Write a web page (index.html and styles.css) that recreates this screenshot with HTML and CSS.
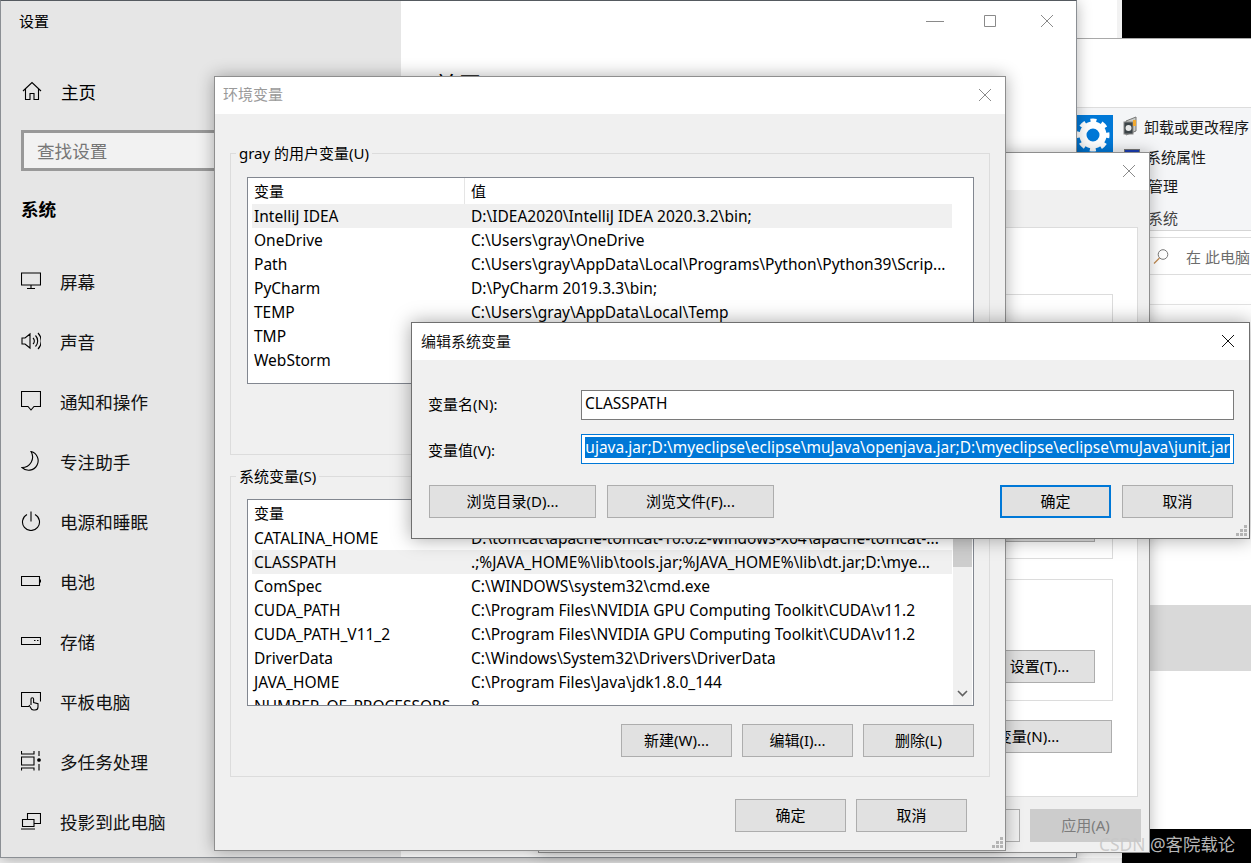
FILE: index.html
```html
<!DOCTYPE html>
<html lang="zh-CN">
<head>
  <meta charset="UTF-8">
  <title>编辑系统变量</title>
  <link rel="stylesheet" href="styles.css">
</head>
<body>
  <div class="desktop">
    <div class="black-top"></div>
    <div class="black-bottom"></div>
    <div class="grey-band"></div>
    <div class="floor-line"></div>

    <!-- control panel, mostly behind everything -->
    <div class="win-panel">
      <div class="panel-top"></div>
      <div class="ribbon">
        <div class="gear-tile">
          <svg width="36" height="38" viewBox="0 0 36 38">
            <circle cx="16" cy="20" r="10" fill="none" stroke="#fff" stroke-width="7"/>
            <circle cx="16" cy="20" r="14.5" fill="none" stroke="#fff" stroke-width="4" stroke-dasharray="6 5.39" stroke-dashoffset="3"/>
          </svg>
        </div>
        <div class="ribbon-links">
          <div class="ribbon-link link-a">
            <svg width="16" height="20" viewBox="0 0 16 20">
              <path d="M3 5l10-4v14l-10 4z" fill="#c9ccc8" stroke="#777"/>
              <rect x="1" y="6" width="9" height="12" fill="#3c4448" stroke="#888"/>
              <circle cx="5.5" cy="12" r="3" fill="#e8e8e8"/>
              <rect x="10" y="4" width="3" height="6" fill="#f0a830"/>
            </svg>
            <span>卸载或更改程序</span>
          </div>
          <div class="ribbon-link link-b">
            <svg class="sys-icon" width="16" height="20" viewBox="0 0 16 20">
              <rect x="0.5" y="0.5" width="15" height="12" fill="#1c3fb5" stroke="#777"/>
            </svg>
            <span>系统属性</span>
          </div>
          <div class="ribbon-link link-c"><span>管理</span></div>
          <div class="ribbon-link link-d"><span>系统</span></div>
        </div>
      </div>
      <div class="panel-search">
        <svg width="16" height="15" viewBox="0 0 16 15">
          <circle cx="10" cy="5.5" r="4.8" fill="none" stroke="#777"/>
          <path d="M6.5 9L1 14.5" stroke="#c08a50" stroke-width="1.2"/>
        </svg>
        <span>在 此电脑</span>
      </div>
      <div class="panel-rule"></div>
    </div>

    <!-- settings app -->
    <div class="win-settings">
      <aside class="side">
        <div class="side-title">设置</div>
        <div class="side-home">
          <svg class="nav-icon" viewBox="0 0 20 20"><path d="M1 10L10 1.5 19 10M3.5 8v10.5H8v-6h4v6h4.500V8"/></svg>
          <span>主页</span>
        </div>
        <div class="side-search">查找设置</div>
        <div class="side-group">系统</div>
        <nav class="side-nav">
          <div class="nav-item">
            <svg class="nav-icon" viewBox="0 0 20 20"><path d="M.5 2h19v12H.5zM10 14v3.500M6 17.500h8"/></svg>
            <span>屏幕</span>
          </div>
          <div class="nav-item">
            <svg class="nav-icon" viewBox="0 0 20 20"><path d="M1 7h3l5-4v14l-5-4H1zM12 7a4 4 0 0 1 0 6M14.500 4.500a8 8 0 0 1 0 11M17 2a11.500 11.500 0 0 1 0 16"/></svg>
            <span>声音</span>
          </div>
          <div class="nav-item">
            <svg class="nav-icon" viewBox="0 0 20 20"><path d="M.5 .5h19v15h-6.500l-3 3.500-3-3.500H.5z"/></svg>
            <span>通知和操作</span>
          </div>
          <div class="nav-item">
            <svg class="nav-icon" viewBox="0 0 20 20"><path d="M10 .5A9.500 9.500 0 1 1 1 16.500 10.500 10.500 0 0 0 10 .5z"/></svg>
            <span>专注助手</span>
          </div>
          <div class="nav-item">
            <svg class="nav-icon" viewBox="0 0 20 20"><path d="M6 3.500a8.500 8.500 0 1 0 8 0M10 .5v10"/></svg>
            <span>电源和睡眠</span>
          </div>
          <div class="nav-item">
            <svg class="nav-icon" viewBox="0 0 20 20"><path d="M.5 5.500h18v9H.5zM19.500 8.500v3"/></svg>
            <span>电池</span>
          </div>
          <div class="nav-item">
            <svg class="nav-icon" viewBox="0 0 20 20"><path d="M.5 6.500h19v7H.5zM13 9.500h1.500M16 9.500h1.500"/></svg>
            <span>存储</span>
          </div>
          <div class="nav-item">
            <svg class="nav-icon" viewBox="0 0 20 20"><path d="M8 15.500H.5V1.500h19v9M10 14V8a1.300 1.300 0 0 1 2.600 0v3.500l4.400 1.200V16a3 3 0 0 1-3 3h-1.500a3 3 0 0 1-2.700-2L8 14"/></svg>
            <span>平板电脑</span>
          </div>
          <div class="nav-item">
            <svg class="nav-icon" viewBox="0 0 20 20"><path d="M.5 0v3h12.500V0M.5 6h12.500v8H.5zM.5 19.500V17h12.500v2.500M18 0v5M18 13v6.500"/><circle cx="18" cy="9" r="1.300" fill="#000"/></svg>
            <span>多任务处理</span>
          </div>
          <div class="nav-item">
            <svg class="nav-icon" viewBox="0 0 20 20"><path d="M6.500 8V2.500h13v10H13M1.500 8.500H13v7H1.500zM0 18h14"/></svg>
            <span>投影到此电脑</span>
          </div>
        </nav>
      </aside>
      <main class="settings-main">
        <div class="win-controls">
          <svg class="ctl-min" width="18" height="12" viewBox="0 0 18 12"><path d="M0 6.500h18"/></svg>
          <svg width="12" height="12" viewBox="0 0 12 12"><path d="M.5 .5h11v11H.5z"/></svg>
          <svg width="12" height="12" viewBox="0 0 12 12"><path d="M0 0l12 12M12 0L0 12"/></svg>
        </div>
        <div class="settings-heading">关于</div>
      </main>
    </div>

    <!-- system properties -->
    <div class="win-props">
      <div class="title-bar">
        <svg class="close-x" width="12" height="12" viewBox="0 0 12 12"><path d="M0 0l12 12M12 0L0 12"/></svg>
      </div>
      <div class="props-body">
        <div class="props-panel">
          <div class="props-box box-a"><button class="btn"></button></div>
          <div class="props-box box-b"><button class="btn">设置(T)...</button></div>
          <div class="props-env"><button class="btn btn-env">环境变量(N)...</button></div>
        </div>
        <div class="props-foot">
          <button class="btn btn-plain"></button>
          <button class="btn btn-off">应用(A)</button>
        </div>
      </div>
    </div>

    <!-- environment variables -->
    <div class="win-env">
      <div class="title-bar title-dim">
        <span>环境变量</span>
        <svg class="close-x" width="12" height="12" viewBox="0 0 12 12"><path d="M0 0l12 12M12 0L0 12"/></svg>
      </div>
      <div class="env-body">
        <section class="group group-user">
          <div class="legend">gray 的用户变量(U)</div>
          <div class="list">
            <div class="list-rows">
              <div class="list-head"><span>变量</span><span class="col-val">值</span></div>
              <div class="row row-on"><span>IntelliJ IDEA</span><span>D:\IDEA2020\IntelliJ IDEA 2020.3.2\bin;</span></div>
              <div class="row"><span>OneDrive</span><span>C:\Users\gray\OneDrive</span></div>
              <div class="row"><span>Path</span><span>C:\Users\gray\AppData\Local\Programs\Python\Python39\Scrip...</span></div>
              <div class="row"><span>PyCharm</span><span>D:\PyCharm 2019.3.3\bin;</span></div>
              <div class="row"><span>TEMP</span><span>C:\Users\gray\AppData\Local\Temp</span></div>
              <div class="row"><span>TMP</span><span></span></div>
              <div class="row"><span>WebStorm</span><span></span></div>
            </div>
          </div>
        </section>
        <section class="group group-sys">
          <div class="legend">系统变量(S)</div>
          <div class="list">
            <div class="list-rows">
              <div class="list-head"><span>变量</span><span class="col-val"></span></div>
              <div class="row"><span>CATALINA_HOME</span><span>D:\tomcat\apache-tomcat-10.0.2-windows-x64\apache-tomcat-...</span></div>
              <div class="row row-on"><span>CLASSPATH</span><span>.;%JAVA_HOME%\lib\tools.jar;%JAVA_HOME%\lib\dt.jar;D:\mye...</span></div>
              <div class="row"><span>ComSpec</span><span>C:\WINDOWS\system32\cmd.exe</span></div>
              <div class="row"><span>CUDA_PATH</span><span>C:\Program Files\NVIDIA GPU Computing Toolkit\CUDA\v11.2</span></div>
              <div class="row"><span>CUDA_PATH_V11_2</span><span>C:\Program Files\NVIDIA GPU Computing Toolkit\CUDA\v11.2</span></div>
              <div class="row"><span>DriverData</span><span>C:\Windows\System32\Drivers\DriverData</span></div>
              <div class="row"><span>JAVA_HOME</span><span>C:\Program Files\Java\jdk1.8.0_144</span></div>
              <div class="row"><span>NUMBER_OF_PROCESSORS</span><span>8</span></div>
            </div>
            <div class="scrollbar">
              <div class="thumb"></div>
              <svg class="chevron" width="11" height="7" viewBox="0 0 11 7"><path d="M1 1l4.500 4.500L10 1"/></svg>
            </div>
          </div>
          <div class="btn-row">
            <button class="btn">新建(W)...</button>
            <button class="btn">编辑(I)...</button>
            <button class="btn">删除(L)</button>
          </div>
        </section>
        <div class="btn-row env-foot">
          <button class="btn">确定</button>
          <button class="btn">取消</button>
        </div>
      </div>
      <svg class="grip" width="12" height="12" viewBox="0 0 12 12"><path d="M8 0h3v3H8zM4 4h3v3H4zM8 4h3v3H8zM0 8h3v3H0zM4 8h3v3H4zM8 8h3v3H8z"/></svg>
    </div>

    <!-- edit system variable -->
    <div class="win-edit">
      <div class="title-bar title-dark">
        <span>编辑系统变量</span>
        <svg class="close-x" width="12" height="12" viewBox="0 0 12 12"><path d="M0 0l12 12M12 0L0 12"/></svg>
      </div>
      <div class="edit-body">
        <div class="field-row">
          <label>变量名(N):</label>
          <div class="field">CLASSPATH</div>
        </div>
        <div class="field-row">
          <label>变量值(V):</label>
          <div class="field field-on">
            <div class="sel-clip"><span class="sel">mujava.jar;D:\myeclipse\eclipse\muJava\openjava.jar;D:\myeclipse\eclipse\muJava\junit.jar</span></div>
          </div>
        </div>
        <div class="edit-btns">
          <button class="btn btn-wide">浏览目录(D)...</button>
          <button class="btn btn-wide">浏览文件(F)...</button>
          <button class="btn btn-main">确定</button>
          <button class="btn">取消</button>
        </div>
      </div>
      <svg class="grip" width="12" height="12" viewBox="0 0 12 12"><path d="M8 0h3v3H8zM4 4h3v3H4zM8 4h3v3H8zM0 8h3v3H0zM4 8h3v3H4zM8 8h3v3H8z"/></svg>
    </div>

    <div class="watermark">CSDN @客院载论</div>
  </div>
</body>
</html>
```

FILE: styles.css
```css
* {
  box-sizing: border-box;
}
body {
  margin: 0;
  font-family: "Noto Sans", "Noto Sans CJK SC", sans-serif;
  font-size: 15px;
  color: #000;
  background: #fff;
}
.desktop {
  position: relative;
  width: 1251px;
  height: 863px;
  overflow: hidden;
  background: #fff;
}
.black-top {
  position: absolute;
  left: 1117px;
  top: 0;
  width: 134px;
  height: 38px;
  background: #000;
  border-left: 5px solid #f2f2f2;
}
.black-bottom {
  position: absolute;
  left: 1122px;
  top: 829px;
  width: 129px;
  height: 34px;
  background: #000;
}
.grey-band {
  position: absolute;
  left: 1150px;
  top: 605px;
  width: 101px;
  height: 66px;
  background: #d9d9d9;
}
.floor-line {
  position: absolute;
  left: 0;
  top: 858px;
  width: 1122px;
  height: 5px;
  background: #f3f3f3;
  border-right: 1px solid #ddd;
}

/* control panel */
.win-panel {
  position: absolute;
  left: 1077px;
  top: 38px;
  width: 174px;
}
.panel-top {
  height: 70px;
  background: #fff;
  border-top: 1px solid #a9a9a9;
  border-bottom: 1px solid #ddd;
}
.ribbon {
  display: flex;
  height: 123px;
  padding-top: 7px;
  background: #f4f5f7;
  border-bottom: 1px solid #d5d5d5;
}
.gear-tile {
  width: 36px;
  height: 38px;
  background: #0078d7;
}
.gear-tile svg {
  display: block;
}
.ribbon-links {
  margin-left: 9px;
  flex: 1;
}
.ribbon-link {
  display: flex;
  align-items: center;
  white-space: nowrap;
  font-size: 15px;
  color: #1a1a1a;
}
.ribbon-link svg {
  flex: none;
}
.link-a {
  height: 24px;
  margin-top: -1px;
  margin-left: 1px;
  gap: 5px;
  margin-bottom: 7px;
}
.link-b {
  height: 22px;
  margin-left: 2px;
  gap: 6px;
}
.sys-icon {
  margin-top: 5px;
}
.link-c {
  height: 36px;
  margin-left: 26px;
}
.link-d {
  height: 28px;
  margin-left: 26px;
  color: #444;
}
.panel-search {
  display: flex;
  align-items: center;
  height: 38px;
  margin-top: 6px;
  padding-left: 76px;
  background: #fff;
  border-top: 1px solid #ddd;
  border-bottom: 1px solid #ddd;
  color: #6d6d6d;
  font-size: 15px;
  white-space: nowrap;
}
.panel-search svg {
  margin-right: 17px;
  flex: none;
}
.panel-rule {
  height: 30px;
  border-bottom: 1px solid #e2e2e2;
}

/* settings */
.win-settings {
  position: absolute;
  left: 0;
  top: 0;
  width: 1077px;
  height: 858px;
  display: flex;
  background: #fff;
  border: 1px solid #8b8f94;
  border-top-color: #555a60;
  box-shadow: 0 2px 14px rgba(0, 0, 0, 0.3);
}
.side {
  width: 400px;
  flex: none;
  padding-left: 20px;
  background: #e6e6e6;
}
.side-title {
  height: 40px;
  margin-left: -2px;
  padding-top: 9px;
  font-size: 15px;
  line-height: 22px;
}
.side-home {
  display: flex;
  align-items: center;
  height: 24px;
  margin-top: 38px;
  font-size: 17.6px;
}
.side-home .nav-icon {
  margin-left: 1px;
  margin-right: 19px;
}
.side-search {
  width: 400px;
  height: 41px;
  margin-top: 27px;
  padding-left: 13px;
  border: 3px solid #999;
  background: #f2f2f2;
  color: #767676;
  font-size: 17.6px;
  line-height: 36px;
}
.side-group {
  height: 26px;
  margin-top: 25px;
  font-size: 17.6px;
  line-height: 26px;
  font-weight: 700;
}
.side-nav {
  margin-top: 29px;
}
.nav-item {
  display: flex;
  align-items: center;
  gap: 19px;
  height: 60px;
  font-size: 17.6px;
  color: #111;
}
.nav-icon {
  width: 20px;
  height: 20px;
  flex: none;
  fill: none;
  stroke: #000;
  stroke-width: 1.1;
}
.settings-main {
  flex: 1;
  position: relative;
}
.win-controls {
  display: flex;
  justify-content: flex-end;
  align-items: center;
  gap: 45px;
  padding: 14px 23px 0 0;
}
.win-controls svg,
.close-x {
  fill: none;
  stroke: #8a8a8a;
  stroke-width: 1;
}
.ctl-min {
  margin-right: -5px;
}
.settings-heading {
  margin: 41px 0 0 33px;
  font-size: 24px;
  line-height: 34px;
}

/* shared window parts */
.title-bar {
  position: relative;
  height: 37px;
  padding: 6px 0 0 8px;
  background: #fff;
  line-height: 22px;
  font-size: 15px;
}
.title-dim {
  color: #9a9a9a;
}
.close-x {
  position: absolute;
  right: 14px;
  top: 12px;
}
.grip {
  position: absolute;
  right: 1px;
  bottom: 1px;
  fill: #b4b4b4;
}
.btn {
  width: 111px;
  height: 33px;
  padding: 0 0 3px;
  flex: none;
  border: 1px solid #adadad;
  background: #e1e1e1;
  color: #000;
  font: inherit;
  font-size: 15px;
}

/* system properties */
.win-props {
  position: absolute;
  left: 538px;
  top: 152px;
  width: 612px;
  height: 701px;
  background: #f0f0f0;
  border: 1px solid #8e8e8e;
  box-shadow: 0 0 14px rgba(0, 0, 0, 0.28);
}
.props-body {
  padding: 37px 11px 0 11px;
}
.props-panel {
  height: 570px;
  padding: 66px 24px 0 20px;
  background: #fff;
  border: 1px solid #dcdcdc;
}
.props-box {
  display: flex;
  justify-content: flex-end;
  align-items: flex-end;
  padding: 0 17px 16px 0;
  border: 1px solid #dcdcdc;
}
.box-a {
  height: 265px;
}
.box-b {
  height: 122px;
  margin-top: 20px;
  padding-bottom: 17px;
}
.props-env {
  display: flex;
  justify-content: flex-end;
  margin-top: 19px;
  margin-right: 1px;
}
.btn-env {
  width: 198px;
}
.props-foot {
  display: flex;
  justify-content: flex-end;
  gap: 10px;
  margin-top: 12px;
  margin-right: -3px;
}
.btn-plain {
  background: #f0f0f0;
}
.btn-off {
  background: #cccccc;
  border-color: #cccccc;
  color: #7c7c7c;
}

/* environment variables */
.win-env {
  position: absolute;
  left: 214px;
  top: 76px;
  width: 792px;
  height: 775px;
  background: #f0f0f0;
  border: 1px solid #8e8e8e;
  box-shadow: 0 0 16px rgba(0, 0, 0, 0.32);
}
.env-body {
  padding: 39px 15px 0 15px;
}
.group {
  position: relative;
  padding: 23px 15px 0 16px;
  border: 1px solid #dcdcdc;
}
.group-user {
  height: 302px;
}
.group-sys {
  height: 301px;
  margin-top: 21px;
  padding-top: 22px;
}
.legend {
  position: absolute;
  left: 5px;
  top: -11px;
  padding: 0 3px;
  background: #f0f0f0;
  line-height: 20px;
  font-size: 15px;
  white-space: nowrap;
}
.list {
  display: flex;
  height: 207px;
  padding: 0 1px 0 4px;
  background: #fff;
  border: 1px solid #828790;
  overflow: hidden;
}
.list-rows {
  width: 700px;
  flex: none;
}
.list-head {
  display: grid;
  grid-template-columns: 212px 1fr;
  height: 26px;
  align-items: center;
  font-size: 15px;
}
.list-head span {
  padding: 0 0 2px 2px;
}
.list-head .col-val {
  height: 100%;
  padding: 0 0 0 6px;
  line-height: 26px;
  border-left: 1px solid #e5e5e5;
}
.row {
  display: grid;
  grid-template-columns: 212px 1fr;
  height: 24px;
  align-items: center;
  font-size: 15.5px;
  white-space: nowrap;
}
.row span {
  padding-left: 2px;
  overflow: hidden;
}
.row span + span {
  padding-left: 7px;
}
.row-on {
  background: #f0f0f0;
}
.scrollbar {
  position: relative;
  width: 19px;
  margin-left: 1px;
  background: #f0f0f0;
  flex: none;
}
.thumb {
  width: 100%;
  height: 50px;
  margin-top: 17px;
  background: #cdcdcd;
}
.chevron {
  position: absolute;
  left: 4px;
  bottom: 8px;
  fill: none;
  stroke: #606060;
  stroke-width: 1.6;
}
.btn-row {
  display: flex;
  justify-content: flex-end;
  gap: 10px;
}
.group-sys .btn-row {
  margin-top: 18px;
}
.env-foot {
  margin-top: 22px;
  margin-right: 23px;
}

/* edit system variable */
.win-edit {
  position: absolute;
  left: 411px;
  top: 322px;
  width: 839px;
  height: 217px;
  background: #f0f0f0;
  border: 1px solid #6f6f6f;
  box-shadow: 0 0 18px rgba(0, 0, 0, 0.35);
}
.title-dark {
  padding: 7px 0 0 9px;
  color: #111;
}
.title-dark .close-x {
  right: 15px;
  stroke: #111;
}
.edit-body {
  padding: 30px 16px 0 16px;
}
.field-row {
  display: flex;
  align-items: center;
  margin-bottom: 14px;
}
.field-row label {
  width: 153px;
  flex: none;
  font-size: 15px;
}
.field-row:first-child label {
  margin-bottom: 4px;
}
.field {
  display: flex;
  flex: none;
  width: 653px;
  height: 30px;
  padding: 0 3px;
  align-items: flex-start;
  background: #fff;
  border: 1px solid #7a7a7a;
  line-height: 24px;
  font-size: 15.5px;
  overflow: hidden;
  white-space: nowrap;
}
.field-on {
  padding: 2px 3px 0;
  border-color: #0078d7;
}
.sel-clip {
  display: flex;
  justify-content: flex-end;
  width: 100%;
  overflow: hidden;
}
.sel {
  flex: none;
  height: 21px;
  line-height: 20px;
  background: #0078d7;
  color: #fff;
}
.edit-btns {
  display: flex;
  gap: 11px;
  margin-top: 21px;
  padding-left: 1px;
}
.btn-wide {
  width: 167px;
}
.btn-main {
  margin-left: auto;
  border: 2px solid #0078d7;
}
.watermark {
  position: absolute;
  left: 1099px;
  top: 832px;
  color: rgba(200, 200, 200, 0.92);
  font-size: 17.4px;
  line-height: 24px;
  white-space: nowrap;
}
```
